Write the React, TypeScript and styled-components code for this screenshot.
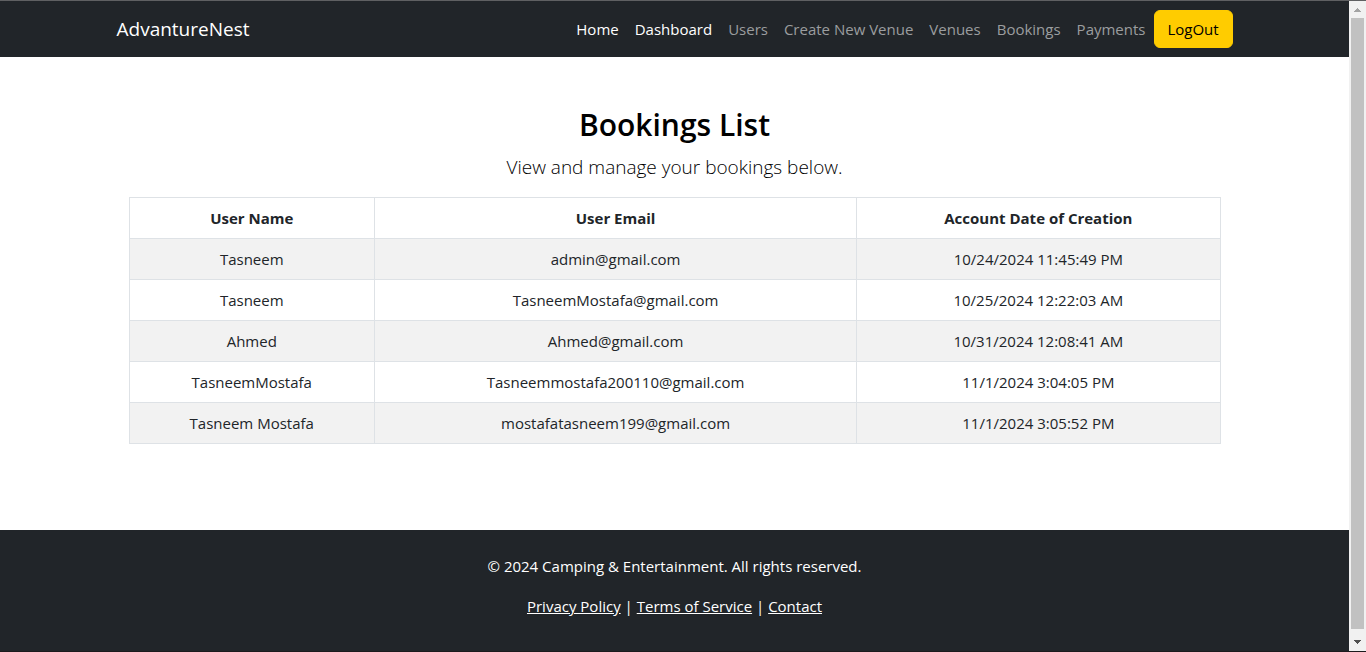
import React from "react";
import styled, { createGlobalStyle } from "styled-components";

const GlobalStyle = createGlobalStyle`
  *, *::before, *::after { box-sizing: border-box; }
  body {
    margin: 0;
    background: #fff;
    color: #212529;
    font-family: "Segoe UI", "Open Sans", "Noto Sans", sans-serif;
    font-size: 15px;
    line-height: 24px;
  }
`;

const Window = styled.div`
  display: grid;
  grid-template-columns: minmax(0, 1fr) 17px;
  min-height: 100vh;
  border-top: 1px solid #5f6062;
  border-bottom: 1px solid #1c1a1d;
`;

const Page = styled.div`
  display: flex;
  flex-direction: column;
`;

const Header = styled.header`
  background: #212529;
`;

const Container = styled.div`
  width: 100%;
  max-width: 1140px;
  margin: 0 auto;
  padding: 0 12px;
`;

const Bar = styled(Container)`
  display: flex;
  align-items: center;
  justify-content: space-between;
  min-height: 56px;
`;

const Brand = styled.a`
  color: #fff;
  font-size: 19px;
  line-height: 30px;
  text-decoration: none;
`;

const Nav = styled.nav`
  display: flex;
  align-items: center;
`;

const NavLink = styled.a<{ $bright?: boolean }>`
  padding: 8px;
  color: ${(p) => (p.$bright ? "#fff" : "#9b9d9f")};
  text-decoration: none;
  white-space: nowrap;
`;

const LogoutButton = styled.button`
  min-width: 79px;
  padding: 6px 12px;
  border: 1px solid #ffcc00;
  border-radius: 6px;
  background: #ffcc00;
  color: #000;
  font: inherit;
  cursor: pointer;
`;

const Main = styled.main`
  flex: 1;
  padding: 48px 0;
  text-align: center;
`;

const Content = styled(Container)`
  padding: 0 24px;
`;

const Title = styled.h1`
  margin: 0 0 8px;
  color: #000;
  font-size: 30px;
  font-weight: 600;
  line-height: 40px;
`;

const Lead = styled.p`
  margin: 0 0 16px;
  color: #000;
  font-size: 19px;
  font-weight: 300;
  line-height: 28px;
`;

const Table = styled.table`
  width: 100%;
  table-layout: fixed;
  border-collapse: collapse;

  tbody tr:nth-child(odd) { background: #f2f2f2; }
`;

const Column = styled.col<{ $share: number }>`
  width: ${(p) => p.$share}%;
`;

const HeadCell = styled.th`
  padding: 8px;
  border: 1px solid #dee2e6;
  font-weight: 700;
`;

const Cell = styled.td`
  padding: 8px;
  border: 1px solid #dee2e6;
`;

const Footer = styled.footer`
  padding: 24px 0 33px;
  background: #212529;
  color: #fff;
  text-align: center;
`;

const Copyright = styled.p`
  margin: 0 0 16px;
`;

const FooterLinks = styled.p`
  margin: 0;
`;

const FooterLink = styled.a`
  color: #fff;
  text-decoration: underline;
`;

const ScrollTrack = styled.div`
  display: flex;
  flex-direction: column;
  align-items: center;
  background: #f1f1f1;
`;

const ScrollArrow = styled.svg`
  display: block;
  width: 17px;
  height: 17px;
`;

const ScrollThumb = styled.div`
  flex: 1;
  width: 13px;
  margin-bottom: 5px;
  background: #c1c1c1;
`;

const navItems = [
  { label: "Home", bright: true },
  { label: "Dashboard", bright: true },
  { label: "Users" },
  { label: "Create New Venue" },
  { label: "Venues" },
  { label: "Bookings" },
  { label: "Payments" },
];

const columns = [
  { label: "User Name", share: 22.5 },
  { label: "User Email", share: 44.2 },
  { label: "Account Date of Creation", share: 33.3 },
];

const bookings = [
  ["Tasneem", "admin@gmail.com", "10/24/2024 11:45:49 PM"],
  ["Tasneem", "TasneemMostafa@gmail.com", "10/25/2024 12:22:03 AM"],
  ["Ahmed", "Ahmed@gmail.com", "10/31/2024 12:08:41 AM"],
  ["TasneemMostafa", "Tasneemmostafa200110@gmail.com", "11/1/2024 3:04:05 PM"],
  ["Tasneem Mostafa", "mostafatasneem199@gmail.com", "11/1/2024 3:05:52 PM"],
];

export default function App() {
  return (
    <>
      <GlobalStyle />
      <Window>
        <Page>
          <Header>
            <Bar>
              <Brand href="#">AdvantureNest</Brand>
              <Nav>
                {navItems.map((item) => (
                  <NavLink key={item.label} href="#" $bright={item.bright}>
                    {item.label}
                  </NavLink>
                ))}
                <LogoutButton type="button">LogOut</LogoutButton>
              </Nav>
            </Bar>
          </Header>
          <Main>
            <Content>
              <Title>Bookings List</Title>
              <Lead>View and manage your bookings below.</Lead>
              <Table>
                <colgroup>
                  {columns.map((c) => (
                    <Column key={c.label} $share={c.share} />
                  ))}
                </colgroup>
                <thead>
                  <tr>
                    {columns.map((c) => (
                      <HeadCell key={c.label} scope="col">{c.label}</HeadCell>
                    ))}
                  </tr>
                </thead>
                <tbody>
                  {bookings.map((row) => (
                    <tr key={row[2]}>
                      {row.map((value) => (
                        <Cell key={value}>{value}</Cell>
                      ))}
                    </tr>
                  ))}
                </tbody>
              </Table>
            </Content>
          </Main>
          <Footer>
            <Copyright>© 2024 Camping &amp; Entertainment. All rights reserved.</Copyright>
            <FooterLinks>
              <FooterLink href="#">Privacy Policy</FooterLink> |{" "}
              <FooterLink href="#">Terms of Service</FooterLink> |{" "}
              <FooterLink href="#">Contact</FooterLink>
            </FooterLinks>
          </Footer>
        </Page>
        <ScrollTrack aria-hidden="true">
          <ScrollArrow viewBox="0 0 17 17" shapeRendering="crispEdges">
            <path d="M8 7h1v1h1v1h1v1h1v1H5v-1h1V9h1V8h1z" fill="#a3a3a3" />
          </ScrollArrow>
          <ScrollThumb />
          <ScrollArrow viewBox="0 0 17 17" shapeRendering="crispEdges">
            <path d="M5 6h7v1h-1v1h-1v1H9v1H8V9H7V8H6V7H5z" fill="#505050" />
          </ScrollArrow>
        </ScrollTrack>
      </Window>
    </>
  );
}
